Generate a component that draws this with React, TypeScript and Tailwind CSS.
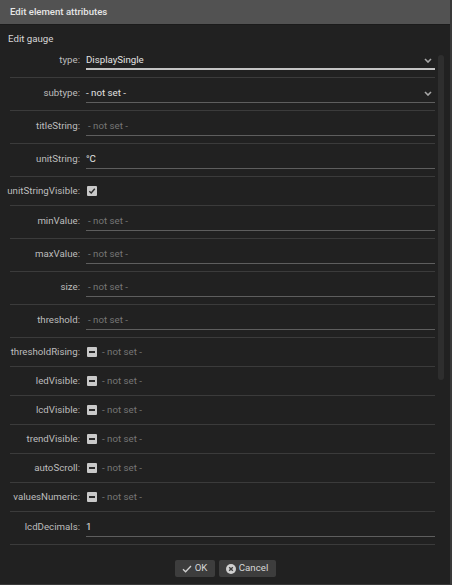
import React from "react";

type Row =
  | { label: string; kind: "select"; value: string; focused?: boolean }
  | { label: string; kind: "text"; value?: string }
  | { label: string; kind: "check"; state: "checked" | "mixed" };

const rows: Row[] = [
  { label: "type", kind: "select", value: "DisplaySingle", focused: true },
  { label: "subtype", kind: "select", value: "- not set -" },
  { label: "titleString", kind: "text" },
  { label: "unitString", kind: "text", value: "°C" },
  { label: "unitStringVisible", kind: "check", state: "checked" },
  { label: "minValue", kind: "text" },
  { label: "maxValue", kind: "text" },
  { label: "size", kind: "text" },
  { label: "threshold", kind: "text" },
  { label: "thresholdRising", kind: "check", state: "mixed" },
  { label: "ledVisible", kind: "check", state: "mixed" },
  { label: "lcdVisible", kind: "check", state: "mixed" },
  { label: "trendVisible", kind: "check", state: "mixed" },
  { label: "autoScroll", kind: "check", state: "mixed" },
  { label: "valuesNumeric", kind: "check", state: "mixed" },
  { label: "lcdDecimals", kind: "text", value: "1" },
];

function Chevron() {
  return (
    <svg width="8" height="5" viewBox="0 0 8 5" className="absolute right-[3px] top-[7px]">
      <path d="M1 1 L4 4 L7 1" stroke="#a8a8a8" strokeWidth="1.6" fill="none" />
    </svg>
  );
}

function Checkbox({ state }: { state: "checked" | "mixed" }) {
  return (
    <span className="flex h-[10px] w-[10px] items-center justify-center rounded-[1px] bg-[#c9c9c9]">
      {state === "checked" ? (
        <svg width="8" height="8" viewBox="0 0 8 8">
          <path d="M1.3 4.2 L3.2 6 L6.8 1.8" stroke="#2a2a2a" strokeWidth="1.4" fill="none" />
        </svg>
      ) : (
        <span className="h-[2px] w-[6px] bg-[#2a2a2a]" />
      )}
    </span>
  );
}

function FieldRow({ row }: { row: Row }) {
  if (row.kind === "check") {
    return (
      <div className="flex h-[29px] items-center border-b border-[#3b3b3b]">
        <div className="-ml-[3px] w-[73px] shrink-0 text-right text-[#bdbdbd] whitespace-nowrap">{row.label}:</div>
        <div className="ml-[7px] flex items-center">
          <Checkbox state={row.state} />
          {row.state === "mixed" && <span className="ml-[5px] text-[#767676]">- not set -</span>}
        </div>
      </div>
    );
  }
  const focused = row.kind === "select" && row.focused;
  return (
    <div className="flex h-[33px] items-start border-b border-[#3b3b3b] pt-[6px]">
      <div className="-ml-[3px] w-[73px] shrink-0 text-right leading-[18px] text-[#bdbdbd] whitespace-nowrap">
        {row.label}:
      </div>
      <div
        className={`relative ml-[6px] h-[19px] flex-1 leading-[18px] ${
          focused ? "border-b-2 border-[#c4c4c4]" : "border-b border-[#5e5e5e]"
        }`}
      >
        {row.value !== undefined ? (
          <span className="text-[#e2e2e2]">{row.value}</span>
        ) : (
          <span className="pl-[2px] text-[#767676]">- not set -</span>
        )}
        {row.kind === "select" && <Chevron />}
      </div>
    </div>
  );
}

export default function App() {
  return (
    <div
      className="flex h-[585px] w-[452px] flex-col bg-[#212121] text-[9.7px] border-r-2 border-b border-[#393939]"
      style={{ fontFamily: "Roboto, 'Liberation Sans', sans-serif" }}
    >
      {/* Title bar */}
      <div className="flex h-[25px] shrink-0 items-center border-b border-[#1b1b1b] bg-[#525252] pl-[10px] pt-[1px] text-[9.6px] font-medium text-[#e6e6e6]">
        Edit element attributes
      </div>

      <div className="h-[20px] shrink-0 pl-[8px] pt-[8px] leading-[12px] text-[#d6d6d6]">Edit gauge</div>

      {/* Scroll area */}
      <div className="relative h-[503px] shrink-0 overflow-hidden">
        <div className="ml-[10px] mr-[15px] flex flex-col">
          {rows.map((r) => (
            <FieldRow key={r.label} row={r} />
          ))}
        </div>
        <div className="absolute right-[6px] top-[10px] h-[325px] w-[6px] rounded-[3px] bg-[#2e2e2e]" />
      </div>

      {/* Footer */}
      <div className="flex flex-1 items-start justify-center gap-[4px] pt-[12px]">
        <button className="flex h-[17px] w-[40px] items-center justify-center gap-[3px] rounded-[2px] bg-[#3d3d3d] text-[#d6d6d6]">
          <svg width="10" height="8" viewBox="0 0 10 8">
            <path d="M1 4.2 L3.6 6.8 L9 1" stroke="#d0d0d0" strokeWidth="1.3" fill="none" />
          </svg>
          OK
        </button>
        <button className="flex h-[17px] w-[57px] items-center justify-center gap-[3px] rounded-[2px] bg-[#3d3d3d] text-[#d6d6d6]">
          <svg width="10" height="10" viewBox="0 0 10 10">
            <circle cx="5" cy="5" r="5" fill="#d0d0d0" />
            <path d="M3.2 3.2 L6.8 6.8 M6.8 3.2 L3.2 6.8" stroke="#3d3d3d" strokeWidth="1.4" />
          </svg>
          Cancel
        </button>
      </div>
    </div>
  );
}
